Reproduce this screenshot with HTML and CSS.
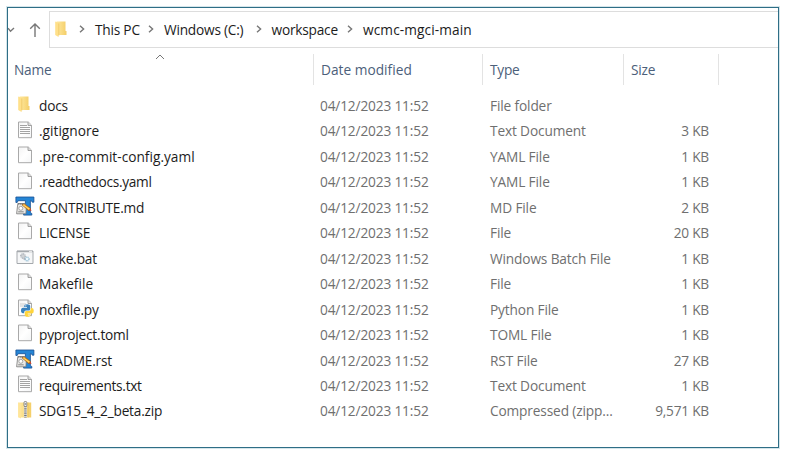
FILE: index.html
```html
<!DOCTYPE html>
<html lang="en">
<head>
<meta charset="utf-8">
<title>wcmc-mgci-main</title>
<link rel="stylesheet" href="styles.css">
</head>
<body>
<svg class="defs" aria-hidden="true">
  <defs>
    <linearGradient id="gold" x1="0" x2="1"><stop offset="0" stop-color="#ffe9a0"/><stop offset="1" stop-color="#f4ce68"/></linearGradient>
    <linearGradient id="paper" x1="0" x2="1" y2="1"><stop offset="0" stop-color="#f3f3f3"/><stop offset=".5" stop-color="#fff"/><stop offset="1" stop-color="#f4f5f6"/></linearGradient>
    <symbol id="folder" viewBox="0 0 20 20"><path d="M4.5 2.5h9V12h1v4h-10z" fill="url(#gold)"/><path d="M3.2 2.5l3.4 1.5v14L3.2 16z" fill="#ffe08a"/><path d="M6.8 4.5v12" stroke="#e9bd56" stroke-width=".6"/></symbol>
    <symbol id="page" viewBox="0 0 20 20"><path d="M3.5 2h9.8l3.2 3.2v12.5h-13z" fill="url(#paper)" stroke="#a9a9a9"/><path d="M13 2v3.5h3.5" fill="#ddd" stroke="#999" stroke-width=".9"/></symbol>
    <symbol id="text" viewBox="0 0 20 20"><use href="#page"/><path d="M5 5.5h7M5 7.5h10M5 9.5h10M5 11.5h10M5 13.5h10" stroke="#999" stroke-width=".9"/></symbol>
    <symbol id="editor" viewBox="0 0 20 20"><path d="M.9 1h18v5.2h-1.6l-.9-1.5h-1v12l1.4.8v1.6H8.6v-1.6l1.8-.8v-12H3.1L2.2 6.500H.9z" fill="#2585d5" stroke="#174f93" stroke-width=".8"/><path d="M2.800 7.500h7l1.700 2-.6 8.300H1.600z" fill="#e9e8e5" stroke="#777" stroke-width=".8"/><path d="M3.800 7v2M5.800 7v2M7.800 7v2M3.200 15.800h5.500" stroke="#707070" stroke-width=".8"/><circle cx="5.800" cy="12.300" r="2" fill="#fff" stroke="#888" stroke-width=".7"/><path d="M6.800 8.700l2.500-.8 6.300 4.400-1.700 2.500z" fill="#ffad28" stroke="#865019" stroke-width=".6"/><path d="M8.200 8.900l6.200 4.300" stroke="#ffe27a" stroke-width=".9"/><path d="M13.800 14.500l1.700-2 1 2.600z" fill="#d2452b"/></symbol>
    <symbol id="batch" viewBox="0 0 20 20"><path d="M2 4h16v12.500H2z" fill="#f6f7f8" stroke="#a5a9ad"/><path d="M2 4.500h16" stroke="#a5a9ad" stroke-width="1.500"/><path d="M14 4.500h3" stroke="#fff" stroke-width=".7"/><circle cx="8" cy="9" r="2.100" fill="none" stroke="#9198a0" stroke-width="1.200" stroke-dasharray="1 .5"/><circle cx="8" cy="9" r=".7" fill="#8b929a"/><circle cx="12" cy="12" r="2" fill="#edf9ff" stroke="#8fbad0" stroke-width="1.200" stroke-dasharray="1 .5"/><path d="M8.500 12h2" stroke="#9198a0"/></symbol>
    <symbol id="python" viewBox="0 0 20 20"><use href="#page"/><path d="M5 6h6M5 8h4" stroke="#c3c3c3" stroke-width=".8"/><path d="M9.200 8q0-1.700 3-1.700t3 1.700v3q0 1.500-1.500 1.500H11q-1.800 0-1.800 1.800v1H8q-2 0-2-2.800t2-2.800h4V9H9.200z" fill="#3b82bd"/><path d="M15.800 10h1.100q1.900 0 1.900 2.800t-1.900 2.800h-4.200v.7h2.800V17q0 1.800-2.900 1.800T9.800 17v-2.400q0-1.500 1.500-1.500h2.700q1.800 0 1.800-1.800z" fill="#ffd43b"/><circle cx="10.800" cy="7.800" r=".6" fill="#fff"/><circle cx="14" cy="17.200" r=".6" fill="#fff"/></symbol>
    <symbol id="zip" viewBox="0 0 20 20"><path d="M3.200 2.500h13V17.500h-13z" fill="url(#gold)"/><path d="M3.200 2.500L6 4v14.500l-2.800-1.500z" fill="#ffe59a"/><path d="M13.200 2.500v15" stroke="#e5bd58" stroke-width=".6"/><path d="M10.400 2v15" stroke="#eee" stroke-width="3"/><path d="M10.400 6v11.500" stroke="#777" stroke-width="2.500" stroke-dasharray="1 .8"/><rect x="9" y="1.500" width="2.800" height="5" rx="1" fill="#eee" stroke="#777" stroke-width=".8"/><path d="M10.400 3v2" stroke="#777" stroke-width=".7"/></symbol>
  </defs>
</svg>
<main class="window">
  <nav class="toolbar">
    <div class="controls">
      <svg class="recent" viewBox="0 0 7 6"><path d="M0 1.2l2.500 3L6 1"/></svg>
      <svg class="up" viewBox="0 0 12 16"><path d="M6 15V2M1.200 6.800L6 2l4.800 4.800"/></svg>
    </div>
    <div class="address">
      <svg class="icon"><use href="#folder"/></svg>
      <svg class="chev" viewBox="0 0 6 8"><path d="M1 .8L4.600 4 1 7.200"/></svg><span class="crumb pc">This PC</span>
      <svg class="chev" viewBox="0 0 6 8"><path d="M1 .8L4.600 4 1 7.200"/></svg><span class="crumb drive">Windows (C:)</span>
      <svg class="chev" viewBox="0 0 6 8"><path d="M1 .8L4.600 4 1 7.200"/></svg><span class="crumb work">workspace</span>
      <svg class="chev" viewBox="0 0 6 8"><path d="M1 .8L4.600 4 1 7.200"/></svg><span class="crumb leaf">wcmc-mgci-main</span>
    </div>
  </nav>
  <header class="head">
    <div class="col name">Name<svg class="sort" viewBox="0 0 10 6"><path d="M1 5l4-4 4 4"/></svg></div>
    <div class="col modified">Date modified</div><div class="col">Type</div><div class="col">Size</div>
  </header>
  <section class="files">
    <div class="row"><svg class="icon"><use href="#folder"/></svg><span class="file">docs</span><span class="date">04/12/2023 11:52</span><span class="type">File folder</span><span class="size"></span></div>
    <div class="row"><svg class="icon"><use href="#text"/></svg><span class="file wide">.gitignore</span><span class="date">04/12/2023 11:52</span><span class="type">Text Document</span><span class="size">3 KB</span></div>
    <div class="row"><svg class="icon"><use href="#page"/></svg><span class="file wide">.pre-commit-config.yaml</span><span class="date">04/12/2023 11:52</span><span class="type">YAML File</span><span class="size">1 KB</span></div>
    <div class="row"><svg class="icon"><use href="#page"/></svg><span class="file tight">.readthedocs.yaml</span><span class="date">04/12/2023 11:52</span><span class="type">YAML File</span><span class="size">1 KB</span></div>
    <div class="row"><svg class="icon"><use href="#editor"/></svg><span class="file">CONTRIBUTE.md</span><span class="date">04/12/2023 11:52</span><span class="type">MD File</span><span class="size">2 KB</span></div>
    <div class="row"><svg class="icon"><use href="#page"/></svg><span class="file">LICENSE</span><span class="date">04/12/2023 11:52</span><span class="type">File</span><span class="size">20 KB</span></div>
    <div class="row"><svg class="icon"><use href="#batch"/></svg><span class="file">make.bat</span><span class="date">04/12/2023 11:52</span><span class="type">Windows Batch File</span><span class="size">1 KB</span></div>
    <div class="row"><svg class="icon"><use href="#page"/></svg><span class="file wide">Makefile</span><span class="date">04/12/2023 11:52</span><span class="type">File</span><span class="size">1 KB</span></div>
    <div class="row"><svg class="icon"><use href="#python"/></svg><span class="file">noxfile.py</span><span class="date">04/12/2023 11:52</span><span class="type">Python File</span><span class="size">1 KB</span></div>
    <div class="row"><svg class="icon"><use href="#page"/></svg><span class="file">pyproject.toml</span><span class="date">04/12/2023 11:52</span><span class="type">TOML File</span><span class="size">1 KB</span></div>
    <div class="row"><svg class="icon"><use href="#editor"/></svg><span class="file">README.rst</span><span class="date">04/12/2023 11:52</span><span class="type">RST File</span><span class="size">27 KB</span></div>
    <div class="row"><svg class="icon"><use href="#text"/></svg><span class="file tight">requirements.txt</span><span class="date">04/12/2023 11:52</span><span class="type">Text Document</span><span class="size">1 KB</span></div>
    <div class="row"><svg class="icon"><use href="#zip"/></svg><span class="file">SDG15_4_2_beta.zip</span><span class="date">04/12/2023 11:52</span><span class="type">Compressed (zipp...</span><span class="size">9,571 KB</span></div>
  </section>
</main>
</body>
</html>
```
FILE: styles.css
```css
* { box-sizing: border-box; }
body { margin: 0; padding: 7px; background: #fff; font-family: "Open Sans", "Noto Sans", sans-serif; font-size: 13.7px; letter-spacing: -.22px; color: #1c1c1c; }
.defs { position: absolute; width: 0; height: 0; }
.window { width: 772px; height: 441px; border: 1px solid #2e6e86; box-shadow: 0 0 0 1px #d5e5ea; padding-top: 3px; overflow: hidden; }
.toolbar { display: flex; height: 37px; }
.controls { width: 41px; display: flex; align-items: center; gap: 14px; flex: none; padding-top: 1px; }
.recent { width: 7px; height: 6px; }
.up { width: 12px; height: 16px; }
.controls path, .chev path, .sort path { fill: none; stroke: #777; stroke-width: 1.4; }
.address { flex: 1; display: flex; align-items: center; border: 1px solid #ddd; border-right: 0; padding-left: 2px; white-space: nowrap; }
.icon { width: 20px; height: 20px; flex: none; margin-top: -3px; }
.address .icon { margin-top: -2px; }
.chev { width: 6px; height: 8px; margin: 0 10px 2px 7px; flex: none; }
.crumb { padding-bottom: 1px; }
.pc { width: 46px; }
.drive { width: 84.5px; }
.work { width: 68.5px; }
.leaf { letter-spacing: .1px; }
.head { display: grid; grid-template-columns: 306px 169px 141px 95px; height: 45px; padding-top: 6px; color: #4c607a; }
.col { height: 31px; line-height: 31px; padding-left: 7px; border-right: 1px solid #e3e3e3; }
.name { position: relative; padding-left: 6px; }
.modified { letter-spacing: .02px; }
.sort { position: absolute; width: 10px; height: 6px; left: 147px; top: 0; }
.sort path { stroke-width: 1; }
.row { display: grid; grid-template-columns: 24px 281px 170px 121px 98px; padding-left: 7px; height: 25.46px; line-height: 25.46px; align-items: center; white-space: nowrap; }
.date, .type, .size { color: #6f6f6f; }
.date { letter-spacing: -.16px; }
.type { letter-spacing: -.14px; }
.wide { letter-spacing: .01px; }
.tight { letter-spacing: -.3px; }
.size { text-align: right; }
```
